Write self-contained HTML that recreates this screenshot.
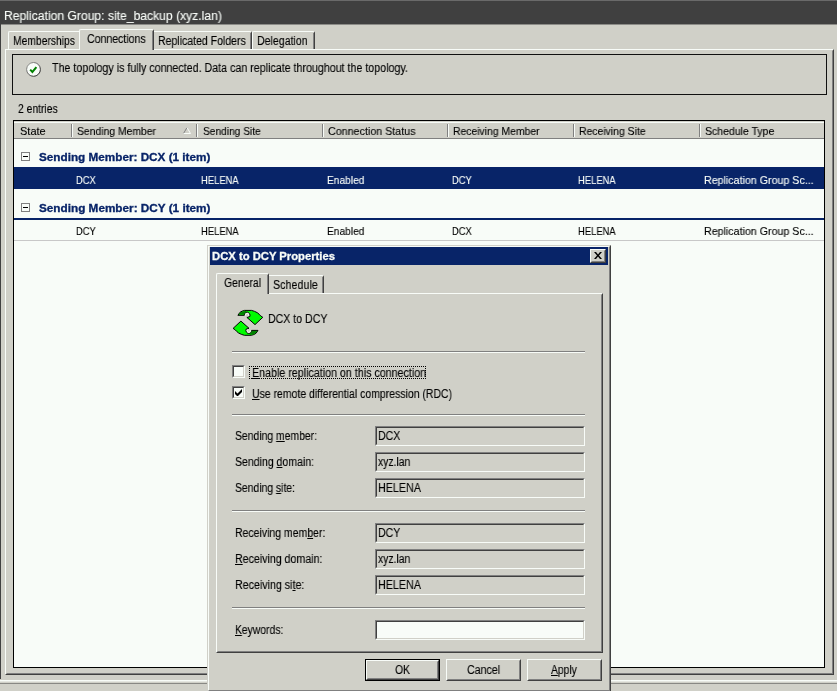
<!DOCTYPE html>
<html><head><meta charset="utf-8"><title>Replication Group: site_backup (xyz.lan)</title>
<style>
html,body{margin:0;padding:0;}
body{width:837px;height:691px;overflow:hidden;background:#d0d0c8;position:relative;
 font-family:"Liberation Sans",sans-serif;font-size:11px;color:#000;}
.d{font-size:12.5px;}
.a{position:absolute;white-space:nowrap;line-height:14px;transform-origin:0 50%;will-change:transform;-webkit-text-stroke-width:0.12px;}
.b{position:absolute;box-sizing:border-box;}
u{text-decoration:underline;}
.w{color:#f8fcf8;}
.nv{color:#082468;font-weight:bold;-webkit-text-stroke-width:0.3px;}
.fld{position:absolute;box-sizing:border-box;left:375px;width:210px;height:20px;
 border:1px solid;border-color:#808080 #f8fcf8 #f8fcf8 #808080;background:#d0d0c8;}
.fld i{position:absolute;left:0;top:0;right:0;bottom:0;border:1px solid;border-color:#404040 #d0d0c8 #d0d0c8 #404040;}
.fld span{position:absolute;left:3px;top:1px;line-height:14px;font-style:normal;}
.sep{position:absolute;left:232px;width:353px;height:2px;border-top:1px solid #808080;border-bottom:1px solid #f8fcf8;box-sizing:border-box;}
.btn{position:absolute;box-sizing:border-box;height:22px;width:75px;top:659px;border:1px solid;border-color:#f8fcf8 #404040 #404040 #f8fcf8;text-align:center;}
.btn i{position:absolute;left:0;top:0;right:0;bottom:0;border:1px solid;border-color:#d0d0c8 #808080 #808080 #d0d0c8;}
.btn span{position:relative;line-height:18px;top:1px;}
.cs{position:absolute;top:124px;height:13px;width:2px;border-left:1px solid #808080;border-right:1px solid #f8fcf8;box-sizing:border-box;}
</style></head><body>

<!-- main title bar -->
<div class="b" style="left:0;top:0;width:837px;height:25px;background:#404040;border-top:1px solid #6a6a6a;border-bottom:1px solid #8c8c88;"></div>
<div class="a w" id="t_title" style="transform:scaleX(0.971);left:4px;top:9px;font-size:12.5px;">Replication Group: site_backup (xyz.lan)</div>

<!-- window left edge -->
<div class="b" style="left:0;top:24px;width:1px;height:655px;background:#404040;"></div>

<!-- tab pane -->
<div class="b" style="left:5px;top:49px;width:829px;height:626px;border:1px solid;border-color:#f8fcf8 #404040 #404040 #f8fcf8;">
 <div class="b" style="left:0;top:0;right:0;bottom:0;border:1px solid;border-color:#d0d0c8 #808080 #808080 #d0d0c8;"></div>
</div>

<!-- tabs -->
<div class="b" style="left:8px;top:31px;width:72px;height:18px;border:1px solid;border-color:#f8fcf8 transparent transparent #f8fcf8;border-bottom:none;border-right:none;border-radius:2px 0 0 0;"></div>
<div class="a d" id="t_mem" style="transform:scaleX(0.826);left:13px;top:34px;">Memberships</div>

<div class="b" style="left:79px;top:29px;width:75px;height:21px;background:#d0d0c8;border:1px solid;border-color:#f8fcf8 #404040 #d0d0c8 #f8fcf8;border-bottom:none;border-radius:2px 2px 0 0;">
 <div class="b" style="right:0;top:1px;width:1px;bottom:0;background:#808080;"></div>
</div>
<div class="a d" id="t_con" style="transform:scaleX(0.845);left:87px;top:32px;">Connections</div>

<div class="b" style="left:154px;top:31px;width:98px;height:18px;border:1px solid;border-color:#f8fcf8 #404040 transparent transparent;border-bottom:none;border-left:none;border-radius:0 2px 0 0;">
 <div class="b" style="right:0;top:1px;width:1px;bottom:0;background:#808080;"></div></div>
<div class="a d" id="t_rep" style="transform:scaleX(0.842);left:158px;top:34px;">Replicated Folders</div>

<div class="b" style="left:252px;top:31px;width:63px;height:18px;border:1px solid;border-color:#f8fcf8 #404040 transparent #f8fcf8;border-bottom:none;border-radius:2px 2px 0 0;">
 <div class="b" style="right:0;top:1px;width:1px;bottom:0;background:#808080;"></div></div>
<div class="a d" id="t_del" style="transform:scaleX(0.848);left:257px;top:34px;">Delegation</div>

<!-- info box -->
<div class="b" style="left:12px;top:54px;width:815px;height:41px;border:1px solid #101010;"></div>
<svg class="b" style="left:25px;top:61px" width="17" height="17" viewBox="0 0 17 17">
 <defs><linearGradient id="cg" x1="0" y1="0" x2="1" y2="1"><stop offset="0" stop-color="#9a9a96"/><stop offset="0.5" stop-color="#606060"/><stop offset="1" stop-color="#101010"/></linearGradient></defs>
 <circle cx="8.5" cy="8.4" r="6.9" fill="#f8fcf8" stroke="url(#cg)" stroke-width="1"/>
 <path d="M5.2 8.6 L7.4 10.9 L11.4 6.2" fill="none" stroke="#008000" stroke-width="2"/>
</svg>
<div class="a d" id="t_info" style="transform:scaleX(0.854);left:52px;top:61px;">The topology is fully connected. Data can replicate throughout the topology.</div>

<div class="a d" id="t_ent" style="transform:scaleX(0.826);left:18px;top:102px;">2 entries</div>

<!-- list -->
<div class="b" style="left:13px;top:120px;width:812px;height:548px;border:1px solid #000;background:#f8fcf8;"></div>
<div class="b" style="left:14px;top:121px;width:810px;height:1px;background:#d0d0c8;"></div>
<div class="b" style="left:14px;top:122px;width:810px;height:17px;background:#d0d0c8;border-bottom:1px solid #808080;border-top:1px solid #f8fcf8;"></div>
<div class="cs" style="left:71px"></div><div class="cs" style="left:196px"></div><div class="cs" style="left:322px"></div>
<div class="cs" style="left:447px"></div><div class="cs" style="left:573px"></div><div class="cs" style="left:699px"></div>
<div class="a" id="h1" style="transform:scaleX(0.997);left:20px;top:124px;">State</div>
<div class="a" id="h2" style="transform:scaleX(0.943);left:77px;top:124px;">Sending Member</div>
<div class="a" id="h3" style="transform:scaleX(0.925);left:203px;top:124px;">Sending Site</div>
<div class="a" id="h4" style="transform:scaleX(0.973);left:328px;top:124px;">Connection Status</div>
<div class="a" id="h5" style="transform:scaleX(0.944);left:453px;top:124px;">Receiving Member</div>
<div class="a" id="h6" style="transform:scaleX(0.947);left:579px;top:124px;">Receiving Site</div>
<div class="a" id="h7" style="transform:scaleX(0.955);left:705px;top:124px;">Schedule Type</div>
<svg class="b" style="left:183px;top:127px" width="8" height="7" viewBox="0 0 8 7"><path d="M0.5 6.5 L4 0.5" stroke="#808080" fill="none"/><path d="M4 0.5 L7.5 6.5 L0.5 6.5" stroke="#f8fcf8" fill="none"/></svg>

<!-- group 1 -->
<div class="b" style="left:21px;top:152px;width:9px;height:9px;border:1px solid #808080;background:#f8fcf8;"><div class="b" style="left:1px;top:3px;width:5px;height:1px;background:#000"></div></div>
<div class="a nv" id="g1" style="transform:scaleX(1.066);left:39px;top:150px;">Sending Member: DCX (1 item)</div>
<div class="b" style="left:14px;top:167px;width:810px;height:22px;background:#082468;"></div>
<div class="a w" id="r11" style="transform:scaleX(0.844);left:76px;top:173px;">DCX</div>
<div class="a w" id="r12" style="transform:scaleX(0.852);left:201px;top:173px;">HELENA</div>
<div class="a w" id="r13" style="transform:scaleX(0.926);left:327px;top:173px;">Enabled</div>
<div class="a w" id="r14" style="transform:scaleX(0.844);left:452px;top:173px;">DCY</div>
<div class="a w" id="r15" style="transform:scaleX(0.852);left:578px;top:173px;">HELENA</div>
<div class="a w" id="r16" style="transform:scaleX(0.969);left:704px;top:173px;">Replication Group Sc...</div>

<!-- group 2 -->
<div class="b" style="left:21px;top:203px;width:9px;height:9px;border:1px solid #808080;background:#f8fcf8;"><div class="b" style="left:1px;top:3px;width:5px;height:1px;background:#000"></div></div>
<div class="a nv" id="g2" style="transform:scaleX(1.068);left:39px;top:201px;">Sending Member: DCY (1 item)</div>
<div class="b" style="left:14px;top:218px;width:810px;height:2px;background:#082468;"></div>
<div class="a" id="r21" style="transform:scaleX(0.844);left:76px;top:224px;">DCY</div>
<div class="a" id="r22" style="transform:scaleX(0.852);left:201px;top:224px;">HELENA</div>
<div class="a" id="r23" style="transform:scaleX(0.926);left:327px;top:224px;">Enabled</div>
<div class="a" id="r24" style="transform:scaleX(0.844);left:452px;top:224px;">DCX</div>
<div class="a" id="r25" style="transform:scaleX(0.852);left:578px;top:224px;">HELENA</div>
<div class="a" id="r26" style="transform:scaleX(0.969);left:704px;top:224px;">Replication Group Sc...</div>
<div class="b" style="left:14px;top:240px;width:810px;height:1px;background:#c8c8c8;"></div>

<!-- bottom etched line -->
<div class="b" style="left:0;top:680px;width:837px;height:1px;background:#f8fcf8;"></div>
<div class="b" style="left:0;top:681px;width:837px;height:1px;background:#e4e6e0;"></div>
<div class="b" style="left:0;top:683px;width:837px;height:1px;background:#888884;"></div>

<!-- dialog -->
<div class="b" style="left:207px;top:245px;width:404px;height:447px;background:#d0d0c8;border:1px solid;border-color:#d0d0c8 #404040 #404040 #d0d0c8;">
 <div class="b" style="left:0;top:0;right:0;bottom:0;border:1px solid;border-color:#f8fcf8 #808080 #808080 #f8fcf8;"></div>
</div>
<div class="b" style="left:210px;top:247px;width:398px;height:18px;background:#082468;"></div>
<div class="a w" id="d_title" style="transform:scaleX(1.023);-webkit-text-stroke-width:0.3px;left:212px;top:249px;font-weight:bold;">DCX to DCY Properties</div>
<div class="b" style="left:590px;top:249px;width:16px;height:14px;background:#d0d0c8;border:1px solid;border-color:#f8fcf8 #404040 #404040 #f8fcf8;">
 <div class="b" style="left:0;top:0;right:0;bottom:0;border:1px solid;border-color:#d0d0c8 #808080 #808080 #d0d0c8;"></div>
 <svg class="b" style="left:3px;top:2px" width="8" height="7" viewBox="0 0 8 7"><path d="M0 0 L2 0 L4 2.5 L6 0 L8 0 L5 3.5 L8 7 L6 7 L4 4.5 L2 7 L0 7 L3 3.5 Z" fill="#000"/></svg>
</div>

<!-- dialog tab pane -->
<div class="b" style="left:216px;top:293px;width:387px;height:360px;border:1px solid;border-color:#f8fcf8 #404040 #404040 #f8fcf8;">
 <div class="b" style="left:0;top:0;right:0;bottom:0;border:1px solid;border-color:#d0d0c8 #808080 #808080 #d0d0c8;"></div>
</div>
<div class="b" style="left:216px;top:273px;width:53px;height:21px;background:#d0d0c8;border:1px solid;border-color:#f8fcf8 #404040 #d0d0c8 #f8fcf8;border-bottom:none;border-radius:2px 2px 0 0;">
 <div class="b" style="right:0;top:1px;width:1px;bottom:0;background:#808080;"></div></div>
<div class="a d" id="d_gen" style="transform:scaleX(0.832);left:224px;top:276px;">General</div>
<div class="b" style="left:269px;top:275px;width:55px;height:18px;border:1px solid;border-color:#f8fcf8 #404040 transparent transparent;border-bottom:none;border-left:none;border-radius:0 2px 0 0;">
 <div class="b" style="right:0;top:1px;width:1px;bottom:0;background:#808080;"></div></div>
<div class="a d" id="d_sch" style="transform:scaleX(0.858);left:273px;top:278px;">Schedule</div>

<!-- icon -->
<svg class="b" style="left:232px;top:308px" width="32" height="30" viewBox="0 0 32 30">
 <g>
  <path d="M5.9 7.3 L7.9 4.4 Q10 2.9 12.5 2.4 L19.5 2.4 Q22.8 3.2 25.3 4.7 Q27.4 6.2 28.7 7.9 L30.8 9.3 L23 16.6 L14.9 9.4 L17.8 8.6 Q18.4 6.8 17.5 5.6 Q16.6 4.4 15.4 4.2 Q13.8 4.1 12.9 5.0 Q12.2 6.0 12.3 7.3 Z" fill="#00fc00" stroke="#000" stroke-width="1" stroke-linejoin="miter"/>
  <path d="M6.8 6.8 L8.4 4.8 Q10.2 3.5 12.6 2.9 L14 3 L14.6 4.4 Q13.2 4.6 12.6 5.4 Q12 6.1 12 6.8 Z" fill="#008000"/>
  <path d="M13.6 7.6 Q13.2 5.6 15.1 5.3 Q16.9 5.4 16.7 7.4 L15.8 8.4" fill="none" stroke="#f8fcf8" stroke-width="0.9"/>
 </g>
 <g transform="rotate(180 15.95 14.85)">
  <path d="M5.9 7.3 L7.9 4.4 Q10 2.9 12.5 2.4 L19.5 2.4 Q22.8 3.2 25.3 4.7 Q27.4 6.2 28.7 7.9 L30.8 9.3 L23 16.6 L14.9 9.4 L17.8 8.6 Q18.4 6.8 17.5 5.6 Q16.6 4.4 15.4 4.2 Q13.8 4.1 12.9 5.0 Q12.2 6.0 12.3 7.3 Z" fill="#00fc00" stroke="#000" stroke-width="1" stroke-linejoin="miter"/>
  <path d="M6.8 6.8 L8.4 4.8 Q10.2 3.5 12.6 2.9 L14 3 L14.6 4.4 Q13.2 4.6 12.6 5.4 Q12 6.1 12 6.8 Z" fill="#008000"/>
  <path d="M13.6 7.6 Q13.2 5.6 15.1 5.3 Q16.9 5.4 16.7 7.4 L15.8 8.4" fill="none" stroke="#f8fcf8" stroke-width="0.9"/>
 </g>
</svg>
<div class="a d" id="d_name" style="transform:scaleX(0.848);left:268px;top:312px;">DCX to DCY</div>
<div class="sep" style="top:351px"></div>

<!-- checkboxes -->
<div class="b" style="left:232px;top:365px;width:13px;height:13px;background:#f8fcf8;border:1px solid;border-color:#808080 #f8fcf8 #f8fcf8 #808080;">
 <div class="b" style="left:0;top:0;right:0;bottom:0;border:1px solid;border-color:#404040 #d0d0c8 #d0d0c8 #404040;"></div></div>
<div class="b" style="left:249px;top:366px;width:177px;height:13px;border:1px dotted #000;"></div>
<div class="a d" id="c1" style="transform:scaleX(0.855);left:252px;top:366px;"><u>E</u>nable replication on this connection</div>
<div class="b" style="left:232px;top:386px;width:13px;height:13px;background:#f8fcf8;border:1px solid;border-color:#808080 #f8fcf8 #f8fcf8 #808080;">
 <div class="b" style="left:0;top:0;right:0;bottom:0;border:1px solid;border-color:#404040 #d0d0c8 #d0d0c8 #404040;"></div>
 <svg class="b" style="left:2px;top:2px" width="7" height="7" viewBox="0 0 7 7"><path d="M0 2 L0 5 L2 7 L3 7 L7 3 L7 0 L2.5 4.5 Z" fill="#000"/></svg>
</div>
<div class="a d" id="c2" style="transform:scaleX(0.838);left:252px;top:387px;"><u>U</u>se remote differential compression (RDC)</div>
<div class="sep" style="top:414px"></div>

<div class="a d" id="l1" style="transform:scaleX(0.831);left:235px;top:429px;">Sending <u>m</u>ember:</div>
<div class="fld" style="top:426px"><i></i></div><div class="a d" id="f1" style="transform:scaleX(0.848);left:378px;top:429px;">DCX</div>
<div class="a d" id="l2" style="transform:scaleX(0.842);left:235px;top:455px;">Sending <u>d</u>omain:</div>
<div class="fld" style="top:452px"><i></i></div><div class="a d" id="f2" style="transform:scaleX(0.828);left:378px;top:455px;">xyz.lan</div>
<div class="a d" id="l3" style="transform:scaleX(0.83);left:235px;top:481px;">Sending <u>s</u>ite:</div>
<div class="fld" style="top:478px"><i></i></div><div class="a d" id="f3" style="transform:scaleX(0.859);left:378px;top:481px;">HELENA</div>
<div class="sep" style="top:510px"></div>
<div class="a d" id="l4" style="transform:scaleX(0.839);left:235px;top:526px;">Receiving mem<u>b</u>er:</div>
<div class="fld" style="top:523px"><i></i></div><div class="a d" id="f4" style="transform:scaleX(0.848);left:378px;top:526px;">DCY</div>
<div class="a d" id="l5" style="transform:scaleX(0.85);left:235px;top:552px;"><u>R</u>eceiving domain:</div>
<div class="fld" style="top:549px"><i></i></div><div class="a d" id="f5" style="transform:scaleX(0.828);left:378px;top:552px;">xyz.lan</div>
<div class="a d" id="l6" style="transform:scaleX(0.853);left:235px;top:578px;">Receiving si<u>t</u>e:</div>
<div class="fld" style="top:575px"><i></i></div><div class="a d" id="f6" style="transform:scaleX(0.859);left:378px;top:578px;">HELENA</div>
<div class="sep" style="top:607px"></div>
<div class="a d" id="l7" style="transform:scaleX(0.827);left:235px;top:623px;"><u>K</u>eywords:</div>
<div class="fld" style="top:620px;background:#f8fcf8"><i></i></div>

<!-- buttons -->
<div class="b" style="left:365px;top:659px;width:75px;height:22px;border:1px solid #000;"></div>
<div class="btn" style="left:366px;top:660px;width:73px;height:20px;"><i></i></div>
<div class="btn" style="left:446px;"><i></i></div>
<div class="btn" style="left:527px;"><i></i></div>

<div class="a d" id="b1" style="transform:scaleX(0.83);left:395px;top:663px;">OK</div>
<div class="a d" id="b2" style="transform:scaleX(0.848);left:467px;top:663px;">Cancel</div>
<div class="a d" id="b3" style="transform:scaleX(0.825);left:551px;top:663px;"><u>A</u>pply</div>
</body></html>
